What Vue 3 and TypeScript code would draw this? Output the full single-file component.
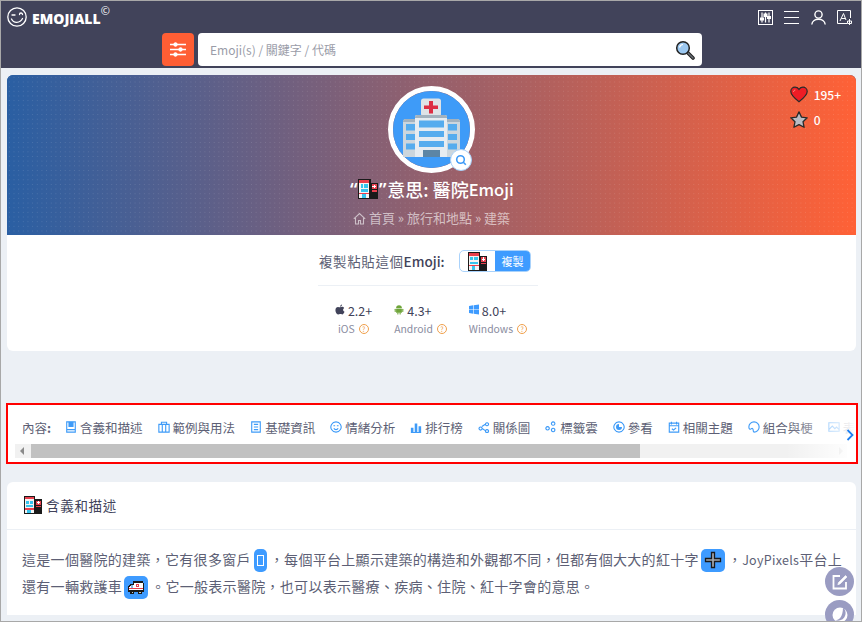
<script setup lang="ts">
const navItems: { label: string; icon: string; solid?: string }[] = [
  { label: '含義和描述', icon: 'M2 1h10v12H2z M2 10h10', solid: 'M4 1h6v6H4z' },
  { label: '範例與用法', icon: 'M1 4h12v9H1z M4 4V1.500h6V4 M5 4v9 M9 4v9' },
  { label: '基礎資訊', icon: 'M2 1h10v12H2z M4.500 4h5 M4.500 7h5 M4.500 10h5' },
  { label: '情緒分析', icon: 'M7 1a6 6 0 1 0 .01 0z M4 5.500h2 M8 5.500h2 M4.500 8.500c1 2 4 2 5 0' },
  { label: '排行榜', icon: 'M1 13.500h12', solid: 'M1 8h3v5H1z M5.500 3h3v10h-3z M10 6h3v7h-3z' },
  { label: '關係圖', icon: 'M3 7a1.800 1.800 0 1 0 .01 0z M10.500 2a1.800 1.800 0 1 0 .01 0z M10.500 10a1.800 1.800 0 1 0 .01 0z M4.500 6.500l4.500-3 M4.500 8.500l4.500 3' },
  { label: '標籤雲', icon: 'M9.500 1a2 2 0 1 0 .01 0z M3 6.500a2 2 0 1 0 .01 0z M9.500 8.500a2 2 0 1 0 .01 0z' },
  { label: '參看', icon: 'M7 1a6 6 0 1 0 .01 0z', solid: 'M7 3.500a3.500 3.500 0 1 0 3.500 3.500H7z' },
  { label: '相關主題', icon: 'M1.500 2.500h11v10.500h-11z M1.500 5.500h11 M4 1v3 M10 1v3 M4.500 9l2 1.500 3-2.500' },
  { label: '組合與梗', icon: 'M7 1a6 6 0 0 0-6 6c0 3 2 3 3 2s2 0 2 1.500S7 13 7 13a6 6 0 0 0 0-12z M4.500 5.500h.01 M8 4h.01 M10.500 6.500h.01' },
  { label: '表情圖片', icon: 'M1 2h12v10H1z M1 10l4-4 3 3 2-2 3 3' },
]
const versions = [
  { name: 'iOS', ver: '2.2+', icon: 'apple' },
  { name: 'Android', ver: '4.3+', icon: 'android' },
  { name: 'Windows', ver: '8.0+', icon: 'windows' },
]
</script>

<template>
  <div class="screen">
    <svg class="defs" width="0" height="0" aria-hidden="true">
      <symbol id="px-hospital" viewBox="0 0 16 16" shape-rendering="crispEdges">
        <rect x="0" y="0" width="10" height="16" fill="#1a1a1a" />
        <rect x="1" y="1" width="8" height="14" fill="#f4f4f4" />
        <rect x="1" y="1" width="8" height="2" fill="#e8404e" />
        <rect x="2" y="4" width="2" height="3" fill="#35c4ee" />
        <rect x="5" y="4" width="3" height="3" fill="#35c4ee" />
        <rect x="2" y="8" width="6" height="2" fill="#35c4ee" />
        <rect x="1" y="11" width="8" height="1" fill="#e8404e" />
        <rect x="3" y="12" width="3" height="3" fill="#35c4ee" />
        <rect x="10" y="3" width="6" height="13" fill="#1a1a1a" />
        <rect x="11" y="4" width="4" height="4" fill="#e8404e" />
        <rect x="12.500" y="4.500" width="1" height="3" fill="#fff" />
        <rect x="11.500" y="5.500" width="3" height="1" fill="#fff" />
        <rect x="11" y="9" width="4" height="1" fill="#e8404e" />
      </symbol>
      <symbol id="px-ambulance" viewBox="0 0 16 16" shape-rendering="crispEdges">
        <path d="M5 3h9v1h1v8H1V8l2-3h2z" fill="#1a1a1a" />
        <path d="M6 4h8v7H2V8l2-2h2z" fill="#fff" />
        <rect x="3.500" y="6.500" width="2" height="2" fill="#7fb8e8" />
        <rect x="8" y="5" width="3" height="3" fill="#e8404e" />
        <rect x="9" y="6" width="1" height="1" fill="#fff" />
        <rect x="2" y="9" width="12" height="1" fill="#e8404e" />
        <rect x="3" y="11" width="3" height="3" fill="#1a1a1a" />
        <rect x="10" y="11" width="3" height="3" fill="#1a1a1a" />
        <rect x="4" y="12" width="1" height="1" fill="#ccc" />
        <rect x="11" y="12" width="1" height="1" fill="#ccc" />
      </symbol>
    </svg>

    <header class="topbar">
      <div class="top-row">
        <div class="brand">
          <svg class="logo" viewBox="0 0 20 20" fill="none" stroke="#fff" stroke-width="1.300">
            <circle cx="10" cy="10" r="9.200" />
            <path d="M5 8h3M12.500 7.500a1.500 1.500 0 0 1 3 0M4.500 12c2 4.500 8.500 4.500 11-.5" stroke-linecap="round" />
          </svg>
          <span class="brand-name">EMOJIALL</span>
          <sup class="brand-c">©</sup>
        </div>
        <div class="top-icons">
          <svg viewBox="0 0 15 15" fill="none" stroke="#fff">
            <rect x=".5" y=".5" width="14" height="14" stroke-width="1" />
            <path d="M4 2.500v10M7.500 2.500v10M11 2.500v10" stroke-width="1.200" />
            <rect x="2.500" y="8" width="3" height="2" fill="#fff" />
            <rect x="6" y="4" width="3" height="2.500" fill="#fff" />
            <rect x="9.500" y="6.500" width="3" height="2" fill="#fff" />
          </svg>
          <svg viewBox="0 0 15 15" fill="none" stroke="#fff" stroke-width="1.200">
            <path d="M0 1.500h15M0 7.500h15M0 13.500h15" />
          </svg>
          <svg viewBox="0 0 15 15" fill="none" stroke="#fff" stroke-width="1.400">
            <circle cx="7.500" cy="4.500" r="3.600" />
            <path d="M.8 14.500c.6-7 12.800-7 13.400 0" />
          </svg>
          <svg viewBox="0 0 15 15" fill="none" stroke="#fff" stroke-width="1">
            <path d="M10 13.500H.5V.5h13V8" />
            <path d="M3 11 6.500 3.500 9 10M4.300 8.500h4" />
            <path d="M12.500 9v6M10.500 11h4v2.500h-4z" />
          </svg>
        </div>
      </div>
      <div class="search-row">
        <button class="filter-btn" type="button" aria-label="filter">
          <svg viewBox="0 0 16 15" fill="none" stroke="#fff" stroke-width="1.300">
            <path d="M0 2.500h16M0 7.500h16M0 12.500h16" />
            <circle cx="5.500" cy="2.500" r="1.500" fill="#fff" />
            <circle cx="10.500" cy="7.500" r="1.500" fill="#fff" />
            <circle cx="5.500" cy="12.500" r="1.500" fill="#fff" />
          </svg>
        </button>
        <div class="search-box">
          <span class="placeholder">Emoji(s) / 關鍵字 / 代碼</span>
          <svg class="search-glass" viewBox="0 0 20 20">
            <path d="M12 12l6 6" stroke="#222" stroke-width="3.600" stroke-linecap="round" />
            <path d="M12.500 12.500l5.500 5.500" stroke="#6a7078" stroke-width="1.400" stroke-linecap="round" />
            <circle cx="8" cy="8" r="6.300" fill="#9cc8f0" stroke="#222" stroke-width="1.500" />
            <path d="M4.500 7.500c.5-2 2-3 3.500-3" fill="none" stroke="#fff" stroke-width="1.200" />
          </svg>
        </div>
      </div>
    </header>

    <main class="page">
      <section class="summary">
        <div class="hero">
          <div class="stats">
            <div class="stat">
              <svg viewBox="0 0 18 17">
                <path d="M9 15.800C3 11 .8 8.500.8 5.500.8 3 2.800 1.200 5 1.200c1.700 0 3 .8 4 2.200 1-1.400 2.300-2.200 4-2.200 2.200 0 4.200 1.800 4.200 4.300 0 3-2.200 5.500-8.200 10.300z" fill="#ee1c25" stroke="#2a2a2a" stroke-width="1.200" />
                <path d="M3.500 6c0-1 .8-2 1.800-2" stroke="#f98" stroke-width="1" fill="none" />
              </svg>
              <span>195+</span>
            </div>
            <div class="stat">
              <svg viewBox="0 0 18 17">
                <path d="M9 .9l2.500 5.200 5.700.7-4.200 3.900 1.100 5.600L9 13.600l-5.100 2.700L5 10.700.8 6.800l5.700-.7z" fill="#b9bcc4" stroke="#2a2a2a" stroke-width="1.300" stroke-linejoin="round" />
              </svg>
              <span>0</span>
            </div>
          </div>
          <div class="avatar">
            <svg viewBox="0 0 77 77" class="hospital">
              <circle cx="38.500" cy="38.500" r="38.500" fill="#3e9bf8" />
              <rect x="28" y="7.500" width="20" height="18" rx="2.500" fill="#dfe3e7" />
              <path d="M36 10h4v4.500h5v3.500h-5v4.500h-4V18h-5v-3.500h5z" fill="#dd2e44" />
              <path d="M10 31q0-3 3-3h51q3 0 3 3v35H10z" fill="#ccd6dd" />
              <path d="M10 31q0-3 3-3h51q3 0 3 3H10z" fill="#a3b2be" />
              <path d="M22 26q0-2 2-2h28q2 0 2 2v40H22z" fill="#e6ecf1" />
              <path d="M22 26q0-2 2-2h28q2 0 2 2v1H22z" fill="#a3b2be" />
              <g fill="#55acee">
                <rect x="26" y="29.500" width="25" height="7" />
                <rect x="26" y="40" width="25" height="6" />
                <rect x="26" y="50" width="25" height="6" />
                <rect x="13" y="33" width="9" height="6.500" />
                <rect x="13" y="43" width="9" height="6" />
                <rect x="13" y="52.500" width="9" height="6" />
                <rect x="55" y="33" width="9" height="6.500" />
                <rect x="55" y="43" width="9" height="6" />
                <rect x="55" y="52.500" width="9" height="6" />
              </g>
              <rect x="30" y="59" width="17" height="7" fill="#5c85a5" />
            </svg>
            <span class="zoom-badge">
              <svg viewBox="0 0 12 12" fill="none" stroke="#3e9bf8" stroke-width="1.600">
                <circle cx="5.500" cy="5.500" r="3.800" />
                <path d="M8.300 8.300l2.500 2.500" />
              </svg>
            </span>
          </div>
          <h1 class="title"><span class="quote">“</span><svg class="px"><use href="#px-hospital" /></svg><span class="quote">”</span>意思: 醫院<span class="title-latin">Emoji</span></h1>
          <nav class="crumbs">
            <svg viewBox="0 0 13 13" fill="none" stroke="currentColor" stroke-width="1.100">
              <path d="M.8 6.800 6.500 1.500l5.700 5.300M2.500 6v6h3V8.500h2V12h3V6" />
            </svg>
            <span>首頁 » 旅行和地點 » 建築</span>
          </nav>
        </div>
        <div class="copy-area">
          <div class="copy-row">
            <span class="copy-label">複製粘貼這個<b>Emoji:</b></span>
            <div class="copy-group">
              <span class="copy-emoji"><svg class="px"><use href="#px-hospital" /></svg></span>
              <span class="copy-btn">複製</span>
            </div>
          </div>
          <div class="versions">
            <div v-for="v in versions" :key="v.name" class="version">
              <div class="version-top">
                <svg v-if="v.icon === 'apple'" viewBox="0 0 12 12"><path d="M8.500 0c0 1.500-1 2.600-2.400 2.700C6 1.300 7.200.2 8.500 0zM6 3.300c.8 0 1.500-.5 2.600-.5 1 0 1.900.5 2.400 1.300-2 1.200-1.600 3.800.4 4.600-.6 1.500-1.600 3.300-2.800 3.300-.9 0-1.100-.5-2.200-.5s-1.400.5-2.200.5C2.200 12 .5 9.300.5 6.800.5 4.300 2 2.900 3.600 2.900c.9 0 1.800.4 2.400.4z" fill="#41435a" /></svg>
                <svg v-else-if="v.icon === 'android'" viewBox="0 0 12 12" fill="#6fa53a"><path d="M2.500 4.500a3.500 3.500 0 0 1 7 0z" /><rect x="2.500" y="5" width="7" height="5" rx=".6" /><rect x=".8" y="5" width="1.300" height="4" rx=".6" /><rect x="9.900" y="5" width="1.300" height="4" rx=".6" /><rect x="4" y="9.500" width="1.300" height="2.500" rx=".6" /><rect x="6.700" y="9.500" width="1.300" height="2.500" rx=".6" /></svg>
                <svg v-else viewBox="0 0 12 12" fill="#3e9bff"><path d="M0 1.800 5 1v4.600H0zM5.700.9 12 0v5.600H5.700zM0 6.300h5V11l-5-.8zM5.700 6.300H12V12l-6.300-.9z" /></svg>
                <span>{{ v.ver }}</span>
              </div>
              <div class="version-bottom">
                <span>{{ v.name }}</span>
                <i class="help">?</i>
              </div>
            </div>
          </div>
        </div>
      </section>

      <section class="toc">
        <div class="toc-row">
          <span class="toc-label">內容<b>:</b></span>
          <a v-for="n in navItems" :key="n.label" class="toc-item">
            <svg viewBox="0 0 14 14" fill="none" stroke="#3e9bf8" stroke-width="1.300">
              <path :d="n.icon" />
              <path v-if="n.solid" :d="n.solid" fill="#3e9bf8" stroke="none" />
            </svg>
            <span>{{ n.label }}</span>
          </a>
        </div>
        <div class="scrollbar">
          <i class="arrow-left"></i>
          <div class="thumb"></div>
          <i class="arrow-right"></i>
        </div>
        <div class="fade"></div>
        <svg class="chevron" viewBox="0 0 8 12" fill="none" stroke="#1e7ff0" stroke-width="1.800"><path d="M1.500 1l5 5-5 5" /></svg>
      </section>

      <section class="article">
        <h2 class="article-head"><svg class="px"><use href="#px-hospital" /></svg>含義和描述</h2>
        <p class="article-body">
          這是一個醫院的建築，它有很多窗戶<span class="chip narrow"><i class="tofu"></i></span>，每個平台上顯示建築的構造和外觀都不同，但都有個大大的紅十字<span class="chip"><svg viewBox="0 0 18 18"><path d="M7.500 1.500h3v6h6v3h-6v6h-3v-6h-6v-3h6z" fill="#a5a8ad" stroke="#1a1a1a" stroke-width="1.300" /></svg></span>，<span class="latin">JoyPixels</span>平台上<br />還有一輛救護車<span class="chip"><svg viewBox="0 0 18 18"><use href="#px-ambulance" /></svg></span>。它一般表示醫院，也可以表示醫療、疾病、住院、紅十字會的意思。
        </p>
        <div class="article-rule"></div>
      </section>
    </main>

    <div class="floats">
      <span class="float">
        <svg viewBox="0 0 16 16" fill="none" stroke="#fff" stroke-width="1.800"><path d="M8 2H1.500v12.500h12.500V8" /><path d="M13.500 1.500l1.500 1.500-7 7-2.200.7.700-2.200z" fill="#fff" stroke-width=".6" /></svg>
      </span>
      <span class="float">
        <svg viewBox="0 0 16 16"><circle cx="8" cy="8" r="7.500" fill="#fff" /><path d="M11 .5A7.500 7.500 0 0 1 3 13c3 .5 8-2 8-12.500z" fill="#9a9cc2" /></svg>
      </span>
    </div>
  </div>
</template>

<style>
html, body { margin: 0; padding: 0; overflow: hidden; }
</style>

<style scoped>
.screen {
  position: relative;
  width: 862px;
  height: 622px;
  box-sizing: border-box;
  border: 1px solid #a8a8a8;
  overflow: hidden;
  background: #ecf0f5;
  font-family: "Noto Sans CJK TC", "Noto Sans", sans-serif;
  color: #41435a;
}
.defs { position: absolute; }
.px { width: 20px; height: 20px; flex: none; }

.topbar {
  height: 67px;
  background: #41435a;
  display: flex;
  flex-direction: column;
}
.top-row {
  height: 32px;
  display: flex;
  justify-content: space-between;
  padding: 6px 9px 0 6px;
  box-sizing: border-box;
}
.brand { display: flex; align-items: flex-start; }
.logo { width: 20px; height: 20px; }
.brand-name {
  margin: 2px 0 0 5px;
  font-family: "Open Sans", sans-serif;
  font-size: 14px;
  line-height: 20px;
  font-weight: 800;
  color: #fff;
}
.brand-c {
  margin: -3px 0 0 0;
  font-family: "Open Sans", sans-serif;
  font-size: 11px;
  line-height: 14px;
  color: #fff;
}
.top-icons { display: flex; gap: 11.500px; padding-top: 3px; }
.top-icons svg { width: 15px; height: 15px; }
.search-row {
  display: flex;
  justify-content: center;
  gap: 4px;
  padding-left: 2px;
}
.filter-btn {
  width: 32px;
  height: 33px;
  border: 0;
  padding: 0;
  border-radius: 4px;
  background: #ff5e34;
  display: flex;
  align-items: center;
  justify-content: center;
}
.filter-btn svg { width: 16px; height: 15px; }
.search-box {
  width: 504px;
  height: 33px;
  box-sizing: border-box;
  background: #fff;
  border-radius: 4px;
  display: flex;
  align-items: center;
  justify-content: space-between;
  padding: 0 7px 0 12px;
}
.placeholder { font-size: 12px; color: #9a9ca8; }
.search-glass { width: 20px; height: 20px; }

.page {
  display: flex;
  flex-direction: column;
  padding: 7px 5px 0 6px;
}
.summary {
  background: #fff;
  border-radius: 6px;
  overflow: hidden;
}
.hero {
  position: relative;
  height: 160px;
  display: flex;
  flex-direction: column;
  align-items: center;
  background-color: #2a5fa3;
  background-image:
    radial-gradient(circle at center, rgba(255, 255, 255, .13) .7px, transparent .9px),
    linear-gradient(90deg, #2a5fa3 0%, #ff6136 100%);
  background-size: 4.670px 4.670px, 100% 100%;
  color: #fff;
}
.stats {
  position: absolute;
  top: 10px;
  right: 15px;
  display: flex;
  flex-direction: column;
  gap: 7px;
}
.stat {
  display: flex;
  align-items: center;
  gap: 6px;
  font-size: 12px;
  font-weight: 500;
  height: 18px;
  min-width: 50px;
}
.stat svg { width: 18px; height: 17px; }
.avatar {
  position: relative;
  width: 77px;
  height: 77px;
  margin-top: 11px;
  border: 5px solid #fff;
  border-radius: 50%;
}
.hospital { display: block; width: 77px; height: 77px; }
.zoom-badge {
  position: absolute;
  right: -2px;
  bottom: -3px;
  width: 20px;
  height: 20px;
  border: 1px solid #a8d0f8;
  border-radius: 50%;
  background: #fff;
  display: flex;
  align-items: center;
  justify-content: center;
}
.zoom-badge svg { width: 12px; height: 12px; }
.title {
  margin: 3px 0 0;
  display: flex;
  align-items: center;
  height: 26px;
  font-size: 18px;
  font-weight: 500;
  line-height: 26px;
}
.quote {
  font-family: "Noto Sans", sans-serif;
  font-weight: 600;
  width: 9px;
  text-align: center;
}
.title-latin { font-size: 16.500px; }
.crumbs {
  margin-top: 7px;
  display: flex;
  align-items: center;
  gap: 3px;
  font-size: 13px;
  line-height: 18px;
  color: rgba(255, 255, 255, .6);
}
.crumbs svg { width: 13px; height: 13px; }

.copy-area {
  height: 116px;
  display: flex;
  flex-direction: column;
  align-items: center;
  padding-right: 7px;
}
.copy-row {
  width: 220px;
  height: 51px;
  box-sizing: border-box;
  display: flex;
  align-items: center;
  justify-content: space-between;
  padding: 2px 7px 0 1px;
  border-bottom: 1px solid #ecf0f5;
}
.copy-label { font-size: 13.500px; color: #5d5f75; letter-spacing: .6px; white-space: nowrap; }
.copy-label b { font-weight: 500; font-size: 13.500px; color: #41435a; letter-spacing: 0; }
.copy-group {
  display: flex;
  flex: none;
  width: 72px;
  height: 22px;
  border-radius: 5px;
  overflow: hidden;
  border: 1px solid #a9d2fb;
  box-sizing: border-box;
}
.copy-emoji {
  width: 35px;
  display: flex;
  align-items: center;
  justify-content: center;
}
.copy-emoji .px { width: 19px; height: 19px; }
.copy-btn {
  flex: 1;
  background: #3e9bff;
  color: #fff;
  font-size: 11px;
  line-height: 20px;
  text-align: center;
}
.versions {
  display: flex;
  gap: 22px;
  margin: 16px 0 0 6px;
}
.version {
  display: flex;
  flex-direction: column;
  align-items: flex-start;
  gap: 1px;
}
.version:first-child .version-bottom { margin-left: 3px; }
.version-top {
  display: flex;
  align-items: center;
  gap: 3px;
  font-size: 12.500px;
  line-height: 18px;
}
.version-top svg { width: 10px; height: 11px; margin-top: -3px; }
.version-bottom {
  display: flex;
  align-items: center;
  gap: 4px;
  font-size: 10.400px;
  line-height: 16px;
  color: #8a8ca0;
}
.help {
  width: 8px;
  height: 8px;
  line-height: 8px;
  border: 1px solid #f0a04b;
  border-radius: 50%;
  color: #f0a04b;
  font-size: 7px;
  font-style: normal;
  text-align: center;
}

.toc {
  position: relative;
  margin: 52px -2px 0 -1px;
  height: 61px;
  box-sizing: border-box;
  border: 2px solid #f00;
  background: #fff;
  overflow: hidden;
}
.toc-row {
  display: flex;
  align-items: center;
  height: 39px;
  padding: 6px 0 1px 14px;
  box-sizing: border-box;
  white-space: nowrap;
  font-size: 12.500px;
  color: #5d5f75;
}
.toc-label { margin-right: 14px; font-size: 12.500px; }
.toc-label b { font-weight: 700; }
.toc-item {
  display: flex;
  align-items: center;
  gap: 3px;
  margin-right: 15px;
  flex: none;
}
.toc-item svg { width: 12px; height: 12px; }
.scrollbar {
  display: flex;
  align-items: center;
  height: 14px;
  margin: 0 9px 0 7px;
  background: #f1f1f1;
  position: relative;
}
.thumb {
  position: absolute;
  left: 16px;
  width: 609px;
  top: 0;
  height: 14px;
  background: #c1c1c1;
}
.arrow-left, .arrow-right {
  position: absolute;
  top: 3px;
  width: 0;
  height: 0;
  border-top: 4px solid transparent;
  border-bottom: 4px solid transparent;
}
.arrow-left { left: 5px; border-right: 4px solid #8a8a8a; }
.arrow-right { right: 4px; border-left: 4px solid #c8c8c8; }
.fade {
  position: absolute;
  top: 0;
  right: 0;
  bottom: 0;
  width: 70px;
  background: linear-gradient(90deg, rgba(255, 255, 255, 0), #fff);
}
.chevron {
  position: absolute;
  right: 2px;
  top: 24px;
  width: 8px;
  height: 12px;
}

.article {
  margin: 18px 0 0 0;
  background: #fff;
  border-radius: 6px 6px 0 0;
}
.article-head {
  margin: 0;
  height: 48px;
  box-sizing: border-box;
  display: flex;
  align-items: center;
  gap: 4px;
  padding: 0 0 2px 17px;
  font-size: 13.500px;
  font-weight: 400;
  letter-spacing: .7px;
  border-bottom: 1px solid #ecf0f5;
}
.article-head .px { width: 18px; height: 18px; }
.article-body {
  margin: 0;
  padding: 16px 0 0 15px;
  font-size: 14px;
  line-height: 27px;
  letter-spacing: .3px;
  white-space: nowrap;
  color: #5d5f75;
}
.latin { font-size: 12.500px; }
.chip {
  display: inline-flex;
  align-items: center;
  justify-content: center;
  width: 24px;
  height: 23px;
  border-radius: 5px;
  background: #3e9bff;
  vertical-align: middle;
  margin: -4px 3px -2px 2px;
}
.chip svg { width: 18px; height: 18px; }
.chip.narrow { width: 13px; margin-left: 3px; }
.tofu {
  width: 5px;
  height: 9px;
  border: 1px solid #fff;
  display: block;
}
.article-rule {
  margin-top: 15px;
  height: 1px;
  background: #ecf0f5;
}

.floats {
  position: absolute;
  top: 566px;
  right: 7px;
  display: flex;
  flex-direction: column;
  gap: 4px;
}
.float {
  width: 29px;
  height: 29px;
  border-radius: 50%;
  background: #9a9cc2;
  display: flex;
  align-items: center;
  justify-content: center;
}
.float svg { width: 16px; height: 16px; }
</style>
